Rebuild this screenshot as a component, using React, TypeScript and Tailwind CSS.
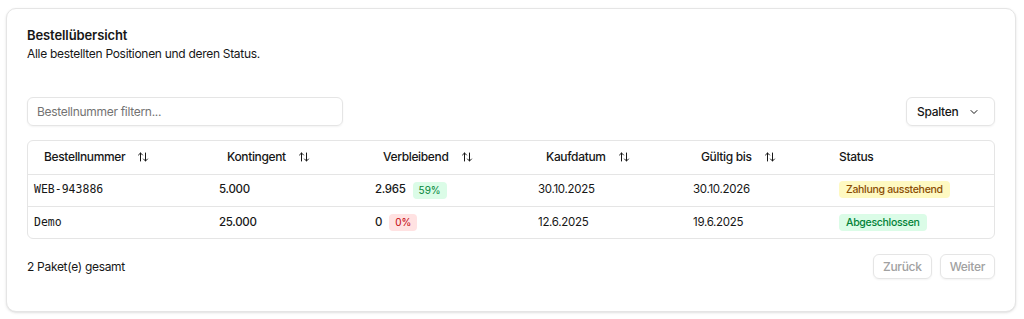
import React from 'react';
import { ArrowUpDown, ChevronDown } from 'lucide-react';

type Row = {
  id: string;
  kontingent: string;
  rest: string;
  pct: string;
  pctTone: 'green' | 'red';
  kauf: string;
  gueltig: string;
  status: string;
  statusTone: 'yellow' | 'green';
};

const rows: Row[] = [
  {
    id: 'WEB-943886',
    kontingent: '5.000',
    rest: '2.965',
    pct: '59%',
    pctTone: 'green',
    kauf: '30.10.2025',
    gueltig: '30.10.2026',
    status: 'Zahlung ausstehend',
    statusTone: 'yellow',
  },
  {
    id: 'Demo',
    kontingent: '25.000',
    rest: '0',
    pct: '0%',
    pctTone: 'red',
    kauf: '12.6.2025',
    gueltig: '19.6.2025',
    status: 'Abgeschlossen',
    statusTone: 'green',
  },
];

function SortHeader({ label }: { label: string }) {
  return (
    <button className="flex items-center pl-2 text-[12px] font-medium tracking-[-0.35px] text-neutral-900">
      <span>{label}</span>
      <ArrowUpDown className="ml-[12px] h-3 w-3" strokeWidth={2} />
    </button>
  );
}

function App() {
  return (
    <div className="min-h-screen bg-white pl-[6px] pr-[8px] pt-[8px] font-['Inter',sans-serif] text-neutral-900">
      <div className="rounded-[10px] border border-neutral-200 bg-white px-5 pt-[18px] pb-[13px] shadow-sm">
        <div>
          <h1 className="text-[13px] font-semibold leading-4 tracking-[-0.1px]">Bestellübersicht</h1>
          <p className="mt-[3px] text-[12px] leading-4 tracking-[-0.3px]">Alle bestellten Positionen und deren Status.</p>
        </div>

        <div className="mt-[35px] flex items-center justify-between">
          <input
            className="h-[29px] w-[316px] rounded-md border border-neutral-200 px-[9px] text-[12px] tracking-[-0.3px] placeholder:text-neutral-500 shadow-xs outline-none"
            placeholder="Bestellnummer filtern..."
          />
          <button className="flex h-[29px] w-[89px] items-center justify-between rounded-md border border-neutral-200 pl-[10px] pr-[14px] text-[12px] font-medium tracking-[-0.3px] shadow-xs">
            <span>Spalten</span>
            <ChevronDown className="h-3 w-3" strokeWidth={2} />
          </button>
        </div>

        <div className="mt-[14px] overflow-hidden rounded-md border border-neutral-200">
          <table className="w-full table-fixed text-[11.5px] tracking-[-0.3px]">
            <thead>
              <tr className="h-[33px] border-b border-neutral-200">
                <th className="w-[183px] px-2 text-left"><SortHeader label="Bestellnummer" /></th>
                <th className="w-[156px] px-2 text-left"><SortHeader label="Kontingent" /></th>
                <th className="w-[163px] px-2 text-left"><SortHeader label="Verbleibend" /></th>
                <th className="w-[155px] px-2 text-left"><SortHeader label="Kaufdatum" /></th>
                <th className="w-[146px] px-2 text-left"><SortHeader label="Gültig bis" /></th>
                <th className="px-2 text-left text-[12px] font-medium tracking-[-0.35px]">Status</th>
              </tr>
            </thead>
            <tbody>
              {rows.map((r, i) => (
                <tr key={r.id} className={i < rows.length - 1 ? 'h-[32px] border-b border-neutral-200' : 'h-[32px]'}>
                  <td className="pl-[6px] pr-2 font-['DejaVu_Sans_Mono',monospace] text-[11.5px] tracking-normal">{r.id}</td>
                  <td className="px-2 font-medium">{r.kontingent}</td>
                  <td className="px-2">
                    <div className="flex items-center gap-[7px]">
                      <span className="font-medium">{r.rest}</span>
                      <span
                        className={
                          r.pctTone === 'green'
                            ? 'rounded-[4px] bg-green-100 px-[6px] py-[2px] text-[10px] leading-[13px] tracking-normal text-green-700'
                            : 'rounded-[4px] bg-red-100 px-[6px] py-[2px] text-[10px] leading-[13px] tracking-normal text-red-700'
                        }
                      >
                        {r.pct}
                      </span>
                    </div>
                  </td>
                  <td className="px-2">{r.kauf}</td>
                  <td className="px-2">{r.gueltig}</td>
                  <td className="px-2">
                    <span
                      className={
                        r.statusTone === 'yellow'
                          ? 'inline-block rounded-[4px] bg-yellow-100 px-[7px] py-[2px] text-[10.5px] font-medium leading-[13px] tracking-[-0.3px] text-yellow-800'
                          : 'inline-block rounded-[4px] bg-green-100 px-[7px] py-[2px] text-[10.5px] font-medium leading-[13px] tracking-[-0.3px] text-green-700'
                      }
                    >
                      {r.status}
                    </span>
                  </td>
                </tr>
              ))}
            </tbody>
          </table>
        </div>

        <div className="mt-[15px] flex items-center justify-between pb-[19px]">
          <span className="text-[12px] tracking-[-0.3px]">2 Paket(e) gesamt</span>
          <div className="flex items-center gap-2">
            <button disabled className="h-[25px] rounded-md border border-neutral-200 px-[9px] text-[12px] font-medium tracking-[-0.3px] text-neutral-400 shadow-xs">
              Zurück
            </button>
            <button disabled className="h-[25px] rounded-md border border-neutral-200 px-[9px] text-[12px] font-medium tracking-[-0.3px] text-neutral-400 shadow-xs">
              Weiter
            </button>
          </div>
        </div>
      </div>
    </div>
  );
}

export default App;
